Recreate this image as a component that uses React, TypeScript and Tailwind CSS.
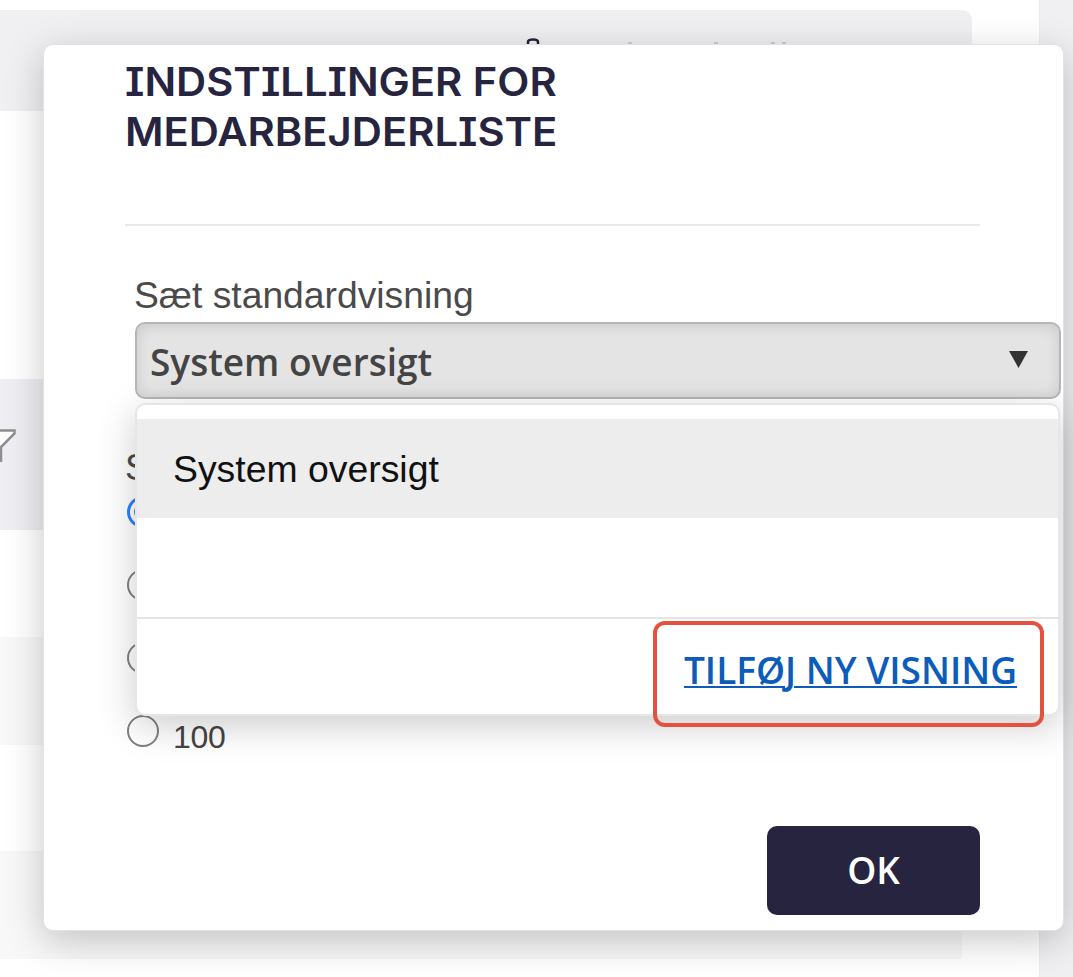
import React from "react";

function Backdrop() {
  return (
    <div className="flex h-full">
      <div className="flex w-[1039px] shrink-0 flex-col bg-white pt-[10px]">
        <div className="flex h-[101px] w-[972px] justify-end overflow-hidden rounded-tr-[10px] bg-[#f0f0f3]">
          <svg width="446" height="34" viewBox="0 0 446 34" fill="none">
            <path d="M2 34v-2q0-2.500 5-2.500t5 2.500v2" stroke="#26243e" strokeWidth="2.500" />
            <path d="M102 33h4M188 33h4M245 33h4M256 33h4" stroke="#cfcfd3" strokeWidth="2" />
          </svg>
        </div>
        <div className="h-[268px]" />
        <div className="h-[151px] w-full bg-[#eeeef3] pt-[49px]">
          <svg width="17" height="34" viewBox="0 0 17 34">
            <path d="M-16 2.500H14.500V5.500L1 19V33H-5V19Z" fill="#fff" stroke="#8f8f8f" strokeWidth="2.500" />
          </svg>
        </div>
        <div className="h-[107px]" />
        <div className="h-[108px] w-[962px] bg-[#f8f8f8]" />
        <div className="h-[106px]" />
        <div className="h-[108px] w-[962px] bg-[#f8f8f8]" />
      </div>
      <div className="flex-1 border-l border-[#ebebee] bg-[#f0f0f3]" />
    </div>
  );
}

function ViewMenu() {
  return (
    <div className="absolute left-0 top-[81px] h-[313px] w-[925px] rounded-[10px] border-2 border-[#e6e6e6] bg-white pt-[14px] shadow-[0_10px_38px_rgba(0,0,0,0.20)]">
      <div className="flex h-[99px] items-center bg-[#ededed] pl-[36px] pt-[2px] text-[36px] text-[#111]">
        <span className="origin-left scale-x-[1.038]">System oversigt</span>
      </div>
      <div className="h-[99px]" />
      <div className="flex h-[97px] justify-end border-t-2 border-[#e4e4e4] pr-[14px] pt-[2px]">
        <div className="flex h-[106px] w-[391px] shrink-0 items-center justify-center rounded-[12px] border-4 border-[#e5513f] pb-[9px] pl-[4px]">
          <a className="whitespace-nowrap font-['Open_Sans',sans-serif] text-[37px] font-semibold text-[#0b5cbb] underline decoration-2 underline-offset-[2px]">
            TILFØJ NY VISNING
          </a>
        </div>
      </div>
    </div>
  );
}

function Radio({ label, checked }: { label?: string; checked?: boolean }) {
  return (
    <label className="flex h-[73px] items-start">
      <span
        className={
          checked
            ? "flex size-8 items-center justify-center rounded-full border-[3px] border-[#2f80f5]"
            : "flex size-8 items-center justify-center rounded-full border-[2.5px] border-[#808080]"
        }
      >
        {checked && <span className="size-[18px] rounded-full bg-[#2f80f5]" />}
      </span>
      {label && (
        <span className="ml-[14px] mt-[2px] text-[32px] leading-[40px] tracking-[-0.3px] text-[#444]">{label}</span>
      )}
    </label>
  );
}

export default function App() {
  return (
    <div className="relative h-[977px] w-[1073px] overflow-hidden bg-white font-['Liberation_Sans',sans-serif]">
      <Backdrop />

      <div className="absolute left-[43px] top-[44px] flex h-[887px] w-[1021px] flex-col rounded-[10px] border border-[#e2e2e2] bg-white pl-[81px] shadow-[0_10px_38px_rgba(0,0,0,0.22)]">
        <div className="h-[181px] w-[855px] border-b-2 border-[#e8e8e8] pt-[12px]">
          <h1 className="w-fit origin-left scale-x-[1.07] font-['Inter',sans-serif] text-[39px] font-semibold leading-[50px] text-[#26243e] [font-feature-settings:'cv08']">
            INDSTILLINGER FOR
            <br />
            MEDARBEJDERLISTE
          </h1>
        </div>

        <div className="ml-[9px] mt-[47px] w-fit origin-left scale-x-[1.035] text-[36px] leading-[46px] text-[#4a4a4a]">
          Sæt standardvisning
        </div>

        <div className="relative z-10 ml-[10px] mt-[3px] h-[78px] w-[926px]">
          <div className="flex h-[77px] items-center justify-between rounded-[10px] border-2 border-[#b6b6b6] bg-[#e4e4e4] pl-[13px] pr-[31px] shadow-[inset_0_2px_14px_rgba(0,0,0,0.12)]">
            <span className="pt-[3px] font-['Open_Sans',sans-serif] text-[37px] font-semibold text-[#444]">
              System oversigt
            </span>
            <svg className="mb-[2px]" width="19" height="17" viewBox="0 0 19 17">
              <path d="M0 0H19L9.500 17Z" fill="#333" />
            </svg>
          </div>
          <ViewMenu />
        </div>

        <div className="mt-[46px] text-[36px] leading-[44px] text-[#4a4a4a]">S</div>
        <div className="mt-[6px] flex flex-col pl-[2px]">
          <Radio checked />
          <Radio />
          <Radio />
          <Radio label="100" />
        </div>

        <button className="ml-[642px] mt-[38px] h-[89px] w-[213px] shrink-0 rounded-[10px] bg-[#26243e] pb-[2px] font-['Open_Sans',sans-serif] text-[37px] font-semibold text-white">
          OK
        </button>
      </div>
    </div>
  );
}
